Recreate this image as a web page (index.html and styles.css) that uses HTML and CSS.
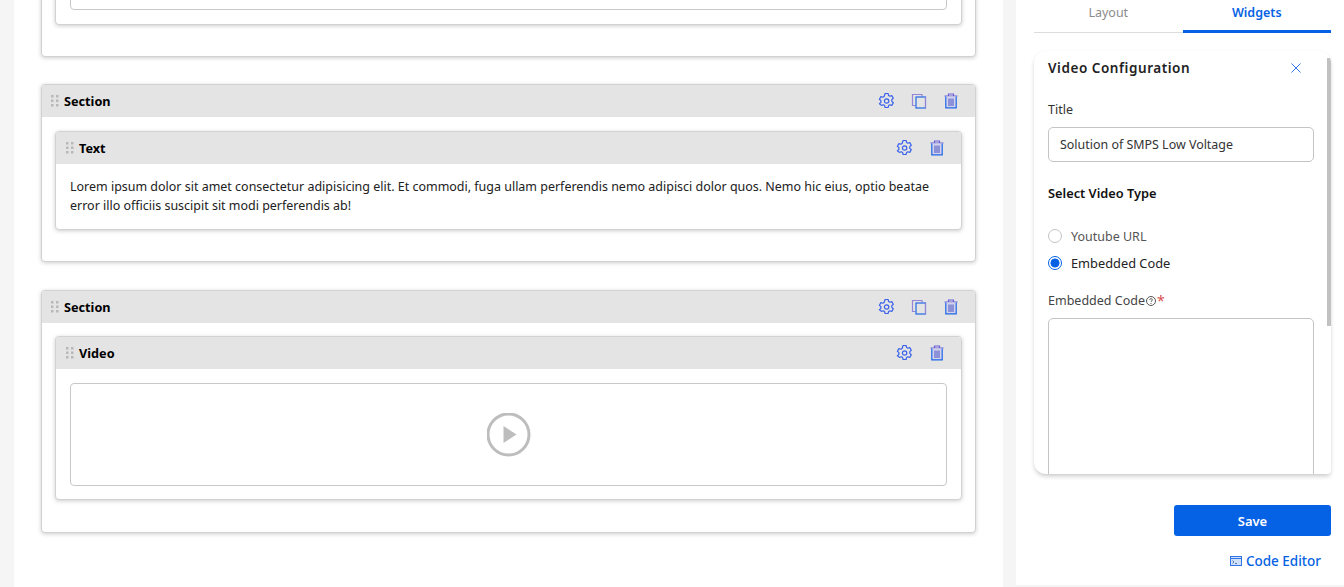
FILE: index.html
```html
<!DOCTYPE html>
<html lang="en">
<head>
<meta charset="utf-8">
<title>Video Configuration</title>
<link rel="stylesheet" href="styles.css">
</head>
<body>
<svg class="defs" width="0" height="0" aria-hidden="true">
  <defs>
    <symbol id="gear" viewBox="0 0 16 16">
      <g transform="translate(.6 0)">
        <path d="M6.500 1h3l.5 2 1.200.7 2-.6 1.500 2.600-1.500 1.400v1.800l1.500 1.400-1.500 2.600-2-.6-1.200.7-.5 2h-3l-.5-2-1.200-.7-2 .6L.8 11.300l1.500-1.400V8.100L.8 6.700l1.500-2.600 2 .6L5.500 4z" transform="translate(0 -.5)" fill="none" stroke="#3a62ea" stroke-width="1.200" stroke-linejoin="round"/>
        <circle cx="8" cy="8" r="2.200" fill="none" stroke="#3a62ea" stroke-width="1.200"/>
      </g>
    </symbol>
    <symbol id="copy" viewBox="0 0 16 16">
      <path d="M11 3.500V1.500H1.500V12.500H4.500" fill="none" stroke="#9585d6" stroke-width="1.200"/>
      <rect x="5" y="4" width="9.500" height="11" fill="none" stroke="#2468e6" stroke-width="1.200"/>
      <path d="M14.500 4V15" stroke="#9a7fd8" stroke-width="1" fill="none"/>
    </symbol>
    <symbol id="trash" viewBox="0 0 16 16">
      <path d="M5.500 2.500V1h5v1.500M1.500 3h13" fill="none" stroke="#6a5fd6" stroke-width="1.200"/>
      <path d="M2.800 3.500V14.800H13.200V3.500" fill="#d2d2ec" stroke="#1f66e6" stroke-width="1.200"/>
      <path d="M6 5.500V13M8 5.500V13M10 5.500V13" fill="none" stroke="#5f66cc" stroke-width="1.200"/>
    </symbol>
    <symbol id="grip" viewBox="0 0 8 12">
      <g fill="#b8b8b8">
        <rect x="0" y="0" width="2.500" height="2.500"/><rect x="5" y="0" width="2.500" height="2.500"/>
        <rect x="0" y="4.500" width="2.500" height="2.500"/><rect x="5" y="4.500" width="2.500" height="2.500"/>
        <rect x="0" y="9" width="2.500" height="2.500"/><rect x="5" y="9" width="2.500" height="2.500"/>
      </g>
    </symbol>
  </defs>
</svg>
<div class="page">
  <main class="canvas">
    <section class="section section-clipped">
      <div class="section-body">
        <div class="card card-clipped">
          <div class="card-body"><div class="video-box video-box-clipped"></div></div>
        </div>
      </div>
    </section>

    <section class="section">
      <header class="bar">
        <svg class="grip"><use href="#grip"/></svg>
        <span class="bar-title">Section</span>
        <span class="actions actions-section">
          <svg class="ico"><use href="#gear"/></svg>
          <svg class="ico"><use href="#copy"/></svg>
          <svg class="ico"><use href="#trash"/></svg>
        </span>
      </header>
      <div class="section-body">
        <div class="card">
          <header class="bar">
            <svg class="grip"><use href="#grip"/></svg>
            <span class="bar-title">Text</span>
            <span class="actions">
              <svg class="ico"><use href="#gear"/></svg>
              <svg class="ico"><use href="#trash"/></svg>
            </span>
          </header>
          <div class="text-body">
            <p>Lorem ipsum dolor sit amet consectetur adipisicing elit. Et commodi, fuga ullam perferendis nemo adipisci dolor quos. Nemo hic eius, optio beatae error illo officiis suscipit sit modi perferendis ab!</p>
          </div>
        </div>
      </div>
    </section>

    <section class="section section-video">
      <header class="bar">
        <svg class="grip"><use href="#grip"/></svg>
        <span class="bar-title">Section</span>
        <span class="actions actions-section">
          <svg class="ico"><use href="#gear"/></svg>
          <svg class="ico"><use href="#copy"/></svg>
          <svg class="ico"><use href="#trash"/></svg>
        </span>
      </header>
      <div class="section-body">
        <div class="card">
          <header class="bar">
            <svg class="grip"><use href="#grip"/></svg>
            <span class="bar-title">Video</span>
            <span class="actions">
              <svg class="ico"><use href="#gear"/></svg>
              <svg class="ico"><use href="#trash"/></svg>
            </span>
          </header>
          <div class="card-body">
            <div class="video-box">
              <svg class="play" viewBox=".5 .5 44 44">
                <circle cx="22" cy="22" r="20.500" fill="none" stroke="#bdbdbd" stroke-width="3"/>
                <path d="M17 13.500 30 22 17 30.500z" fill="#bdbdbd"/>
              </svg>
            </div>
          </div>
        </div>
      </div>
    </section>
  </main>

  <aside class="panel">
    <nav class="tabs">
      <span class="tab">Layout</span>
      <span class="tab tab-active">Widgets</span>
    </nav>
    <div class="config">
      <div class="scrollbar"></div>
      <div class="config-head">
        <h2>Video Configuration</h2>
        <svg class="close" viewBox="0 0 10 10"><path d="M.5.500l9 9M9.500.500l-9 9" stroke="#2f76e4" stroke-width="1" fill="none"/></svg>
      </div>
      <label class="field-label">Title</label>
      <div class="input">Solution of SMPS Low Voltage</div>
      <h3 class="type-title">Select Video Type</h3>
      <div class="radio-row"><span class="radio"></span><span class="radio-label">Youtube URL</span></div>
      <div class="radio-row"><span class="radio radio-on"></span><span class="radio-label radio-label-on">Embedded Code</span></div>
      <label class="field-label code-label">Embedded Code<svg class="help" viewBox="0 0 12 12"><circle cx="6" cy="6" r="4.500" fill="none" stroke="#555" stroke-width="1"/><path d="M4.700 4.900c0-1.700 2.700-1.700 2.700 0 0 1-1.400 1-1.400 2.100" fill="none" stroke="#555" stroke-width=".9"/><circle cx="6" cy="8.500" r=".6" fill="#555"/></svg><span class="req">*</span></label>
      <div class="textarea"></div>
    </div>
    <div class="save-row"><button class="save">Save</button></div>
    <div class="editor-row">
      <svg class="term" viewBox="0 0 12 12"><rect x=".5" y="1.500" width="11" height="9" fill="#cfe0f8" stroke="#2f76e4"/><path d="M.5 3.500h11" stroke="#2f76e4"/><path d="M2.500 5.500l1.500 1.500-1.500 1.500M5 8.500h2" fill="none" stroke="#2f5fa8" stroke-width=".8"/></svg>
      <span>Code Editor</span>
    </div>
  </aside>
</div>
</body>
</html>
```

FILE: styles.css
```css
* { box-sizing: border-box; }
html, body { margin: 0; height: 100%; overflow: hidden; }
body { background: #f5f5f5; font-family: "Noto Sans", "Open Sans", sans-serif; font-size: 12px; color: #212121; }
.defs { position: absolute; }
.page { display: flex; height: 587px; padding-left: 14px; }
.canvas { width: 989px; height: 587px; background: #fff; padding: 0 27px; overflow: hidden; flex: none; }
.section { width: 935px; background: #fff; border: 1px solid #d2d2d2; border-radius: 4px; box-shadow: 0 1px 4px rgba(0,0,0,.2); margin-bottom: 28px; }
.section-clipped { height: 91px; margin-top: -34px; margin-bottom: 27px; }
.section-body { padding: 14px 13px 31px; }
.section-video .section-body { padding-top: 13px; padding-bottom: 32px; }
.section-clipped .section-body { padding: 0 13px; }
.card { background: #fff; border: 1px solid #d2d2d2; border-radius: 4px; box-shadow: 0 1px 4px rgba(0,0,0,.2); }
.card-clipped { height: 58px; }
.card-body { padding: 14px 14px 13px; }
.card-clipped .card-body { padding: 0 14px; }
.video-box { height: 103px; border: 1px solid #c8c8c8; border-radius: 4px; display: flex; align-items: center; justify-content: center; }
.video-box-clipped { height: 42px; }
.play { width: 44px; height: 44px; }
.bar { height: 32px; background: #e4e4e4; display: flex; align-items: center; padding-left: 9px; border-radius: 3px 3px 0 0; }
.card .bar { padding-left: 10px; }
.grip { width: 8px; height: 12px; margin-right: 5px; flex: none; }
.bar-title { font-size: 12.700px; font-weight: 700; color: #000; }
.actions { margin-left: auto; display: flex; gap: 17px; padding-right: 16px; }
.actions-section { gap: 16.500px; }
.ico { width: 16px; height: 16px; display: block; }
.text-body { padding: 13px 14px 0; height: 65px; }
.text-body p { margin: 0; font-size: 12.480px; line-height: 19px; color: #212121; }
.panel { width: 328px; height: 585px; margin-left: 13px; background: #fff; padding: 0 13px 0 18px; flex: none; }
.tabs { display: flex; height: 33px; border-bottom: 1px solid #ddd; }
.tab { width: 149px; text-align: center; font-size: 12.500px; color: #8c8c8c; line-height: 25px; }
.tab-active { color: #0562e4; font-weight: 600; border-bottom: 3px solid #0562e4; height: 33px; }
.config { position: relative; height: 423px; margin-top: 18px; padding: 0 14px; border-radius: 12px 12px 4px 12px; box-shadow: 0 3px 5px -1px rgba(0,0,0,.22), 0 0 2px rgba(0,0,0,.04); overflow: hidden; }
.scrollbar { position: absolute; right: 0; top: 7px; width: 4px; height: 268px; background: #c1c1c1; }
.config-head { display: flex; align-items: center; justify-content: space-between; height: 34px; padding-right: 16px; }
.config-head h2 { margin: 0; font-size: 13.500px; font-weight: 600; letter-spacing: .55px; color: #222; }
.close { width: 10px; height: 10px; }
.field-label { display: block; margin-top: 16px; font-size: 12.500px; line-height: 17px; color: #333; }
.input { width: 266px; height: 35px; margin-top: 9px; border: 1px solid #c4c4c4; border-radius: 5px; padding: 0 11px; line-height: 33px; font-size: 12.450px; color: #333; }
.type-title { margin: 23px 0 21px; font-size: 12.800px; font-weight: 600; line-height: 17px; color: #111; }
.radio-row { display: flex; align-items: center; gap: 9px; height: 26.500px; }
.radio { width: 14px; height: 14px; border-radius: 50%; border: 1px solid #c4c4c4; flex: none; }
.radio-on { border: 1.500px solid #0562e4; background: radial-gradient(circle, #0562e4 0 4.200px, #fff 4.800px); }
.radio-label { font-size: 12.500px; color: #555; }
.radio-label-on { font-size: 12.800px; color: #222; }
.code-label { margin-top: 16px; display: flex; align-items: center; color: #444; }
.help { width: 12px; height: 12px; }
.req { color: #d9534f; font-size: 14px; }
.textarea { width: 266px; height: 200px; margin-top: 9px; border: 1px solid #c4c4c4; border-radius: 5px; }
.save-row { display: flex; justify-content: flex-end; margin-top: 31px; }
.save { width: 157px; height: 31px; border: 0; border-radius: 3px; background: #0562e4; color: #fff; font: 600 13px "Noto Sans", sans-serif; }
.editor-row { display: flex; justify-content: flex-end; align-items: center; gap: 4px; margin-top: 15px; padding-right: 10px; color: #0562e4; font-size: 13.500px; font-weight: 500; line-height: 20px; }
.term { width: 12px; height: 12px; }
```
